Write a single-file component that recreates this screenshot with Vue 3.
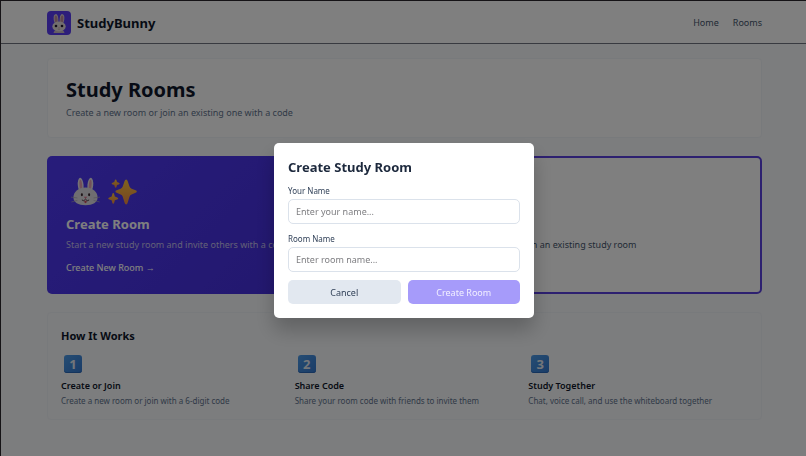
<script setup>
import { ref } from 'vue'

const yourName = ref('')
const roomName = ref('')
const steps = [
  { n: 1, title: 'Create or Join', text: 'Create a new room or join with a 6-digit code' },
  { n: 2, title: 'Share Code', text: 'Share your room code with friends to invite them' },
  { n: 3, title: 'Study Together', text: 'Chat, voice call, and use the whiteboard together' },
]
</script>

<template>
  <div class="page">
    <header class="topbar">
      <a class="brand" href="#">
        <svg class="logo" viewBox="0 0 24 24" aria-hidden="true">
          <rect width="24" height="24" rx="4" fill="#5b3df5" />
          <ellipse cx="9" cy="8" rx="2.300" ry="4.900" fill="#d9cfd2" transform="rotate(-6 9 8)" />
          <ellipse cx="15" cy="8" rx="2.300" ry="4.900" fill="#d9cfd2" transform="rotate(6 15 8)" />
          <ellipse cx="9.100" cy="8.300" rx="1.400" ry="3.900" fill="#c08c9c" transform="rotate(-6 9.100 8.300)" />
          <ellipse cx="14.900" cy="8.300" rx="1.400" ry="3.900" fill="#c08c9c" transform="rotate(6 14.900 8.300)" />
          <path d="M6.500 22c.5-2.500 2-3.500 5.500-3.500s5 1 5.500 3.500z" fill="#cbbcc2" />
          <ellipse cx="12" cy="15.500" rx="6.700" ry="5" fill="#e4dcdc" />
          <circle cx="9" cy="15" r="1.300" fill="#221a2c" />
          <circle cx="15" cy="15" r="1.300" fill="#221a2c" />
          <path d="M11.200 16.400h1.600l-.8.800z" fill="#c86d7d" />
          <path d="M10.800 18q.6.500 1.200-.2.600.7 1.200.2" fill="none" stroke="#86616b" stroke-width=".4" />
        </svg>
        <span>StudyBunny</span>
      </a>
      <nav class="nav">
        <a href="#">Home</a>
        <a href="#">Rooms</a>
      </nav>
    </header>

    <main class="content">
      <section class="hero">
        <h1>Study Rooms</h1>
        <p>Create a new room or join an existing one with a code</p>
      </section>

      <div class="choices">
        <section class="choice create">
          <div class="art">
            <svg viewBox="0 0 36 36" aria-hidden="true">
              <ellipse cx="12" cy="10" rx="3.600" ry="9" fill="#e9e5ec" transform="rotate(-5 12 10)" />
              <ellipse cx="24" cy="10" rx="3.600" ry="9" fill="#e9e5ec" transform="rotate(5 24 10)" />
              <ellipse cx="12.200" cy="10.500" rx="1.700" ry="7" fill="#e9a3b5" transform="rotate(-5 12.200 10.500)" />
              <ellipse cx="23.800" cy="10.500" rx="1.700" ry="7" fill="#e9a3b5" transform="rotate(5 23.800 10.500)" />
              <path d="M18 13c9 0 15 5.500 15 12.500C33 31.500 27 35 18 35S3 31.500 3 25.500C3 18.500 9 13 18 13z" fill="#dfdde3" />
              <path d="M0 25l8 1M.5 31l7.500-2M36 25l-8 1M35.500 31l-7.500-2" stroke="#aaa5b3" stroke-width=".8" />
              <ellipse cx="13.500" cy="22" rx="1.300" ry="1.800" fill="#3b292f" />
              <ellipse cx="22.500" cy="22" rx="1.300" ry="1.800" fill="#3b292f" />
              <path d="M15.800 24.500h4.400L18 27z" fill="#de718a" />
              <path d="M13.500 28.500q2.500 2.500 4.500-1 2 3.500 4.500 1" fill="none" stroke="#513a42" stroke-width="1.200" />
              <path d="M16.300 29.500h3.400q0 3-1.700 3t-1.700-3z" fill="#c94b60" />
            </svg>
            <svg viewBox="0 0 36 36" aria-hidden="true">
              <defs>
                <linearGradient id="gold" x1="0" y1="0" x2="0" y2="1">
                  <stop offset="0" stop-color="#ffc83f" />
                  <stop offset="1" stop-color="#f08a45" />
                </linearGradient>
              </defs>
              <g fill="url(#gold)">
                <path d="M22.500 3q1.300 0 1.900 2l2.300 6.800q.7 2 2.600 2.700l5 2q1.500.6 1.500 1.600t-1.500 1.600l-5 2q-1.900.7-2.600 2.700L24.400 32q-.6 2-1.900 2t-1.900-2l-2.300-7.600q-.7-2-2.600-2.700l-5-2q-1.500-.6-1.500-1.600t1.500-1.600l5-2q1.900-.7 2.600-2.700L20.600 5q.6-2 1.900-2z" />
                <path d="M6.500 20q.9 0 1.200 1.300l.8 2.900 2.900 1.100q1.300.5 1.300 1.300t-1.300 1.300l-2.900 1.100-.8 2.900Q7.400 33.200 6.500 33.200T5.300 31.900L4.500 29l-2.900-1.100Q.3 27.400.3 26.600t1.300-1.300l2.900-1.100.8-2.900Q5.600 20 6.500 20z" />
                <path d="M9.500 3q.8 0 1 .9l.7 2.300 2.200.8q1.100.4 1.100 1.100t-1.100 1.100l-2.200.8-.7 2.300q-.2.900-1 .9t-1-.9L7.800 10l-2.200-.8Q4.500 8.800 4.500 8.100T5.600 7l2.200-.8.7-2.300q.2-.9 1-.9z" />
              </g>
            </svg>
          </div>
          <h2>Create Room</h2>
          <p>Start a new study room and invite others with a code</p>
          <a href="#">Create New Room →</a>
        </section>
        <section class="choice join">
          <div class="art"></div>
          <h2>Join Room</h2>
          <p>Enter a room code to join an existing study room</p>
          <a href="#">Join Room →</a>
        </section>
      </div>

      <section class="how">
        <h2>How It Works</h2>
        <div class="steps">
          <article v-for="s in steps" :key="s.n">
            <span class="key">{{ s.n }}</span>
            <h3>{{ s.title }}</h3>
            <p>{{ s.text }}</p>
          </article>
        </div>
      </section>
    </main>

    <div class="overlay">
      <form class="modal" role="dialog" aria-labelledby="dialog-title" @submit.prevent>
        <h2 id="dialog-title">Create Study Room</h2>
        <label for="your-name">Your Name</label>
        <input id="your-name" v-model="yourName" type="text" placeholder="Enter your name..." />
        <label for="room-name">Room Name</label>
        <input id="room-name" v-model="roomName" type="text" placeholder="Enter room name..." />
        <div class="actions">
          <button class="cancel" type="button">Cancel</button>
          <button class="submit" type="submit">Create Room</button>
        </div>
      </form>
    </div>
  </div>
</template>

<style>
body {
  background: #f8fafc;
}
</style>

<style scoped>
* {
  box-sizing: border-box;
}
.page {
  min-height: 100vh;
  border-top: 1px solid #2a272c;
  border-left: 1px solid #2a272c;
  background: #f8fafc;
  color: #0f172b;
  font-family: "Noto Sans", "Open Sans", sans-serif;
  font-size: 9px;
  line-height: 14px;
}
h1, h2, h3, p {
  margin: 0;
}
a {
  color: inherit;
  text-decoration: none;
}
.topbar {
  display: flex;
  align-items: center;
  justify-content: space-between;
  height: 43px;
  padding: 2px 44px 0 46px;
  background: #fff;
  border-bottom: 1px solid #707580;
}
.brand {
  display: flex;
  align-items: center;
  gap: 6px;
  font-size: 13px;
  font-weight: 700;
}
.logo {
  width: 24px;
  height: 24px;
}
.nav {
  display: flex;
  gap: 14px;
  color: #45556c;
}
.content {
  display: flex;
  flex-direction: column;
  gap: 18px;
  padding: 14px 44px 36px 46px;
}
.hero {
  padding: 17px 18px;
  background: #fff;
  border: 1px solid #f1f5f9;
  border-radius: 4px;
}
.hero h1 {
  font-size: 20px;
  line-height: 28px;
}
.hero p {
  margin-top: 2px;
  color: #62748e;
}
.choices {
  display: grid;
  grid-template-columns: 1fr 1fr;
  gap: 14px;
}
.choice {
  display: flex;
  flex-direction: column;
  align-items: flex-start;
  padding: 18px;
  border: 1px solid #5a40e0;
  border-radius: 5px;
}
.create {
  color: #fff;
  background: linear-gradient(135deg, #4f39f6, #432dd7);
  border-color: transparent;
  background-origin: border-box;
}
.join {
  background: #fff;
  border-width: 2px;
  padding: 17px;
}
.art {
  display: flex;
  gap: 8px;
  height: 36px;
  padding: 2px 5px;
}
.art svg {
  width: 29px;
  height: 29px;
}
.choice h2 {
  margin-top: 4px;
  font-size: 13px;
  line-height: 18px;
}
.choice p {
  margin-top: 5px;
  color: #45556c;
}
.create p {
  color: #c6c0ee;
}
.choice a {
  margin-top: 9px;
  font-weight: 500;
}
.how {
  padding: 14px 13px 12px;
  border: 1px solid #f1f5f9;
  border-radius: 4px;
}
.how h2 {
  font-size: 11px;
  line-height: 18px;
}
.steps {
  display: grid;
  grid-template-columns: repeat(3, 1fr);
  gap: 14px;
  margin-top: 10px;
}
.key {
  display: block;
  width: 18px;
  height: 18px;
  margin-left: 3px;
  border-radius: 3px;
  background: linear-gradient(135deg, #4c9be8, #3478cf);
  box-shadow: inset 0 -1px #2b69b8;
  color: #e6edf5;
  font-size: 13px;
  font-weight: 700;
  line-height: 18px;
  text-align: center;
}
.steps h3 {
  margin-top: 6px;
  font-size: 9px;
  font-weight: 600;
}
.steps p {
  margin-top: 2px;
  font-size: 8px;
  line-height: 12px;
  color: #62748e;
}
.overlay {
  position: fixed;
  inset: 0;
  display: flex;
  align-items: center;
  justify-content: center;
  padding: 5px 0 0 2px;
  background: rgba(0, 0, 0, 0.5);
}
.modal {
  display: flex;
  flex-direction: column;
  width: 260px;
  max-width: 90%;
  padding: 14px;
  background: #fff;
  border-radius: 5px;
  box-shadow: 0 12px 20px rgba(0, 0, 0, 0.22);
}
.modal h2 {
  margin-bottom: 7px;
  color: #1d293d;
  font-size: 13px;
  line-height: 20px;
}
.modal label {
  margin-bottom: 2px;
  color: #314158;
  font-size: 8px;
  line-height: 13px;
}
.modal input {
  height: 25px;
  margin-bottom: 8px;
  padding: 0 7px;
  border: 1px solid #dbe2eb;
  border-radius: 5px;
  background: #fff;
  color: #1d293d;
  font: inherit;
  outline: none;
}
.modal input::placeholder {
  color: #7d7d80;
  opacity: 1;
}
.actions {
  display: flex;
  gap: 7px;
}
.actions button {
  flex: 1;
  height: 24px;
  padding: 2px 0 0;
  border: 0;
  border-radius: 5px;
  font: inherit;
}
.cancel {
  background: #e2e8f0;
  color: #314158;
}
.submit {
  background: #a69bfa;
  color: #f2f0ff;
}
</style>
